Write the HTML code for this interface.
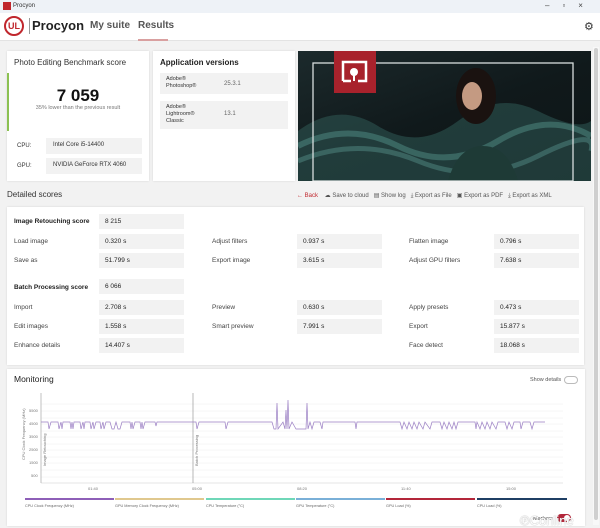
<!DOCTYPE html>
<html><head><meta charset="utf-8"><style>
*{box-sizing:border-box;margin:0;padding:0}
body{width:600px;height:528px;overflow:hidden;background:#f2f2f2;font-family:"Liberation Sans",sans-serif;color:#333;position:relative}
.abs{position:absolute}
.card{position:absolute;background:#fff;box-shadow:0 0 2px rgba(0,0,0,.12)}
.box{position:absolute;background:#f2f2f2}
.t7{font-size:7px}
.lbl{position:absolute;font-size:6.5px;color:#444}
.val{position:absolute;font-size:6.5px;color:#222;background:#f2f2f2;padding-left:6px;line-height:15px;height:15px}
</style></head><body>
<div class="abs" style="left:0;top:0;width:600px;height:13px;background:#eef2f7"></div>
<div class="abs" style="left:3px;top:2px;width:8px;height:8px;background:#c0272d"></div>
<div class="abs t7" style="left:13px;top:3px;font-size:6px;color:#333">Procyon</div>
<div class="abs" style="left:545px;top:1px;font-size:8px;color:#444;letter-spacing:13px">–▫×</div>
<div class="abs" style="left:0;top:13px;width:600px;height:28px;background:#fff;border-bottom:1px solid #e3e3e3"></div>
<div class="abs" style="left:4px;top:16px;width:20px;height:20px;border:2px solid #c0272d;border-radius:50%;color:#c0272d;font-size:9px;font-weight:bold;text-align:center;line-height:16px">UL</div>
<div class="abs" style="left:29px;top:18px;width:1px;height:16px;background:#999"></div>
<div class="abs" style="left:32px;top:18px;font-size:13px;font-weight:bold;color:#222">Procyon</div>
<div class="abs" style="left:90px;top:20px;font-size:10px;font-weight:bold;color:#555">My suite</div>
<div class="abs" style="left:138px;top:20px;font-size:10px;font-weight:bold;color:#555">Results</div>
<div class="abs" style="left:138px;top:39px;width:30px;height:2px;background:#d9a0a0"></div>
<div class="abs" style="left:584px;top:20px;font-size:11px;color:#333">⚙</div>
<div class="abs" style="left:593px;top:47px;width:6px;height:478px;background:#f8f8f8"></div>
<div class="abs" style="left:594px;top:48px;width:4px;height:472px;background:#cfcfcf;border-radius:2px"></div>
<div class="card" style="left:7px;top:51px;width:142px;height:130px"></div>
<div class="abs" style="left:14px;top:58px;font-size:8px;color:#333">Photo Editing Benchmark score</div>
<div class="abs" style="left:7px;top:73px;width:2px;height:58px;background:#8cc152"></div>
<div class="abs" style="left:7px;top:86px;width:142px;text-align:center;font-size:17px;font-weight:bold;color:#111">7 059</div>
<div class="abs" style="left:7px;top:105px;width:142px;text-align:center;font-size:5.5px;color:#777">35% lower than the previous result</div>
<div class="abs t7" style="left:17px;top:143px;font-size:6px">CPU:</div>
<div class="box" style="left:46px;top:138px;width:96px;height:16px"></div>
<div class="abs" style="left:53px;top:142px;font-size:6px">Intel Core i5-14400</div>
<div class="abs t7" style="left:17px;top:163px;font-size:6px">GPU:</div>
<div class="box" style="left:46px;top:158px;width:96px;height:16px"></div>
<div class="abs" style="left:53px;top:162px;font-size:6px">NVIDIA GeForce RTX 4060</div>
<div class="card" style="left:153px;top:51px;width:142px;height:130px"></div>
<div class="abs" style="left:160px;top:58px;font-size:8px;font-weight:bold;color:#222">Application versions</div>
<div class="box" style="left:160px;top:73px;width:128px;height:21px"></div>
<div class="abs" style="left:166px;top:76px;font-size:5.5px;line-height:7px">Adobe®<br>Photoshop®</div>
<div class="abs" style="left:224px;top:81px;font-size:6px;color:#666">25.3.1</div>
<div class="box" style="left:160px;top:101px;width:128px;height:28px"></div>
<div class="abs" style="left:166px;top:104px;font-size:5.5px;line-height:7px">Adobe®<br>Lightroom®<br>Classic</div>
<div class="abs" style="left:224px;top:111px;font-size:6px;color:#666">13.1</div>
<div class="abs" style="left:298px;top:51px;width:293px;height:130px;background:linear-gradient(160deg,#1c2a2c 0%,#10191b 50%,#0d1516 100%);overflow:hidden">
<svg width="293" height="130" style="position:absolute;left:0;top:0">
<path d="M0 80 Q40 50 80 75 T160 70 T240 60 T293 70 L293 130 L0 130Z" fill="#2f5a55" opacity=".55"/>
<path d="M0 95 Q50 70 100 95 T200 90 T293 85" stroke="#5fa59a" stroke-width="6" fill="none" opacity=".4"/>
<path d="M0 110 Q60 85 120 110 T240 105 T293 100" stroke="#6ab0a5" stroke-width="5" fill="none" opacity=".35"/>
<ellipse cx="178" cy="45" rx="20" ry="28" fill="#1a1210"/>
<ellipse cx="174" cy="45" rx="10" ry="14" fill="#c49a82"/>
<path d="M150 130 Q160 95 185 95 Q210 95 220 130Z" fill="#1e3a36"/>
<rect x="15" y="12" width="260" height="118" fill="none" stroke="#d8dede" stroke-width="1.3"/>
<rect x="36" y="0" width="42" height="42" fill="#a8222c"/>
<path d="M45 30 V11 H68 V30 H60 M53 30 H45" stroke="#fff" stroke-width="2.5" fill="none"/>
<circle cx="56" cy="21" r="4" fill="#fff"/><rect x="55" y="21" width="2" height="9" fill="#fff"/>
</svg></div>
<div class="abs" style="left:7px;top:190px;font-size:8px;color:#333">Detailed scores</div>
<div class="abs" style="left:297px;top:192px;font-size:6px;color:#555;white-space:nowrap"><span style="color:#c0272d">← Back</span>&nbsp;&nbsp;&nbsp;&nbsp;☁ Save to cloud&nbsp;&nbsp;&nbsp;▤ Show log&nbsp;&nbsp;&nbsp;⤓ Export as File&nbsp;&nbsp;&nbsp;▣ Export as PDF&nbsp;&nbsp;&nbsp;⤓ Export as XML</div>
<div class="card" style="left:7px;top:207px;width:577px;height:158px"></div>
<div class="lbl" style="left:14px;top:218px;font-weight:bold;color:#222">Image Retouching score</div><div class="val" style="left:99px;top:214px;width:85px">8 215</div>
<div class="lbl" style="left:14px;top:238px">Load image</div><div class="val" style="left:99px;top:234px;width:85px">0.320 s</div>
<div class="lbl" style="left:212px;top:238px">Adjust filters</div><div class="val" style="left:297px;top:234px;width:85px">0.937 s</div>
<div class="lbl" style="left:409px;top:238px">Flatten image</div><div class="val" style="left:494px;top:234px;width:85px">0.796 s</div>
<div class="lbl" style="left:14px;top:257px">Save as</div><div class="val" style="left:99px;top:253px;width:85px">51.799 s</div>
<div class="lbl" style="left:212px;top:257px">Export image</div><div class="val" style="left:297px;top:253px;width:85px">3.615 s</div>
<div class="lbl" style="left:409px;top:257px">Adjust GPU filters</div><div class="val" style="left:494px;top:253px;width:85px">7.638 s</div>
<div class="lbl" style="left:14px;top:284px;font-weight:bold;color:#222">Batch Processing score</div><div class="val" style="left:99px;top:279px;width:85px">6 066</div>
<div class="lbl" style="left:14px;top:304px">Import</div><div class="val" style="left:99px;top:300px;width:85px">2.708 s</div>
<div class="lbl" style="left:212px;top:304px">Preview</div><div class="val" style="left:297px;top:300px;width:85px">0.630 s</div>
<div class="lbl" style="left:409px;top:304px">Apply presets</div><div class="val" style="left:494px;top:300px;width:85px">0.473 s</div>
<div class="lbl" style="left:14px;top:323px">Edit images</div><div class="val" style="left:99px;top:319px;width:85px">1.558 s</div>
<div class="lbl" style="left:212px;top:323px">Smart preview</div><div class="val" style="left:297px;top:319px;width:85px">7.991 s</div>
<div class="lbl" style="left:409px;top:323px">Export</div><div class="val" style="left:494px;top:319px;width:85px">15.877 s</div>
<div class="lbl" style="left:14px;top:342px">Enhance details</div><div class="val" style="left:99px;top:338px;width:85px">14.407 s</div>
<div class="lbl" style="left:409px;top:342px">Face detect</div><div class="val" style="left:494px;top:338px;width:85px">18.068 s</div>
<div class="card" style="left:7px;top:369px;width:578px;height:157px"></div>
<div class="abs" style="left:14px;top:374px;font-size:8.5px;color:#222">Monitoring</div>
<div class="abs" style="left:530px;top:377px;font-size:5.5px;color:#555">Show details</div>
<div class="abs" style="left:564px;top:376px;width:14px;height:8px;border-radius:4px;border:1px solid #bbb;background:#fff"></div>
<svg class="abs" style="left:0;top:0" width="600" height="528">
<g stroke="#eee" stroke-width=".5">
<line x1="41" y1="404" x2="563" y2="404"/><line x1="41" y1="411" x2="563" y2="411"/><line x1="41" y1="418" x2="563" y2="418"/><line x1="41" y1="424" x2="563" y2="424"/><line x1="41" y1="431" x2="563" y2="431"/><line x1="41" y1="437" x2="563" y2="437"/><line x1="41" y1="444" x2="563" y2="444"/><line x1="41" y1="450" x2="563" y2="450"/><line x1="41" y1="457" x2="563" y2="457"/><line x1="41" y1="463" x2="563" y2="463"/><line x1="41" y1="470" x2="563" y2="470"/><line x1="41" y1="477" x2="563" y2="477"/>
</g>
<line x1="41" y1="483" x2="563" y2="483" stroke="#ccc" stroke-width=".6"/>
<line x1="41" y1="393" x2="41" y2="483" stroke="#999" stroke-width=".6"/>
<line x1="193" y1="393" x2="193" y2="483" stroke="#888" stroke-width=".6"/>
<g font-size="4" fill="#777" font-family="Liberation Sans">
<text x="29" y="412">5500</text><text x="29" y="425">4500</text><text x="29" y="438">3500</text><text x="29" y="451">2500</text><text x="29" y="464">1500</text><text x="31" y="477">500</text>
<text x="88" y="490">01:40</text><text x="192" y="490">05:00</text><text x="297" y="490">08:20</text><text x="401" y="490">11:40</text><text x="506" y="490">15:00</text>
<text transform="translate(25,460) rotate(-90)">CPU Clock Frequency (MHz)</text>
<text transform="translate(46,466) rotate(-90)">Image Retouching</text>
<text transform="translate(198,466) rotate(-90)">Batch Processing</text>
</g>
<polyline fill="none" stroke="#9b7fc4" stroke-width=".7" points="41,422 48,422 49,429 51,422 58,422 59,429 61,422 62,429 63,422 70,422 71,429 72,422 73,429 74,422 80,422 81,429 83,422 84,429 85,422 90,422 91,429 93,422 94,429 96,422 100,422 101,429 103,422 104,429 106,422 110,422 112,429 114,429 116,422 118,429 120,429 122,422 130,422 131,429 132,422 133,429 135,422 140,422 141,429 142,422 143,429 145,422 155,422 156,426 157,422 168,422 170,422 180,422 193,422 196,422 197,429 199,422 225,422 226,429 228,422 272,422 274,429 276,429 277,403 278,429 283,422 285,429 286,410 287,429 288,400 289,429 292,422 296,429 306,429 307,403 308,429 310,422 312,429 314,422 320,422 322,429 323,422 340,422 355,422 356,429 357,422 376,422 400,422 402,429 404,422 407,429 409,422 412,429 414,422 417,429 419,422 423,429 425,422 430,429 432,422 440,422 442,429 444,422 447,429 449,422 452,429 454,422 456,429 458,422 470,422 475,422 476,429 477,422 480,429 482,422 485,429 487,422 490,429 492,422 496,429 498,422 505,422 507,429 509,422 512,429 514,422 520,422 521,429 523,422 530,422 532,429 534,422 545,422"/>
<rect x="25" y="498" width="89" height="2" fill="#8e5fb8"/>
<rect x="115" y="498" width="89" height="2" fill="#e0c88e"/>
<rect x="206" y="498" width="89" height="2" fill="#6fd7b8"/>
<rect x="296" y="498" width="89" height="2" fill="#7ab0d8"/>
<rect x="386" y="498" width="89" height="2" fill="#b3263a"/>
<rect x="477" y="498" width="90" height="2" fill="#1f3f64"/>
<g font-size="3.8" fill="#666" font-family="Liberation Sans">
<text x="25" y="507">CPU Clock Frequency (MHz)</text><text x="115" y="507">GPU Memory Clock Frequency (MHz)</text><text x="206" y="507">CPU Temperature (°C)</text><text x="296" y="507">GPU Temperature (°C)</text><text x="386" y="507">GPU Load (%)</text><text x="477" y="507">CPU Load (%)</text>
</g>
<text x="533" y="520" font-size="5.5" fill="#555" font-family="Liberation Sans">Markers</text>
<rect x="557" y="514" width="14" height="8" rx="4" fill="#b3263a"/><circle cx="567" cy="518" r="3" fill="#fff"/>
</svg>
<div class="abs" style="left:520px;top:513px;font-size:13px;color:#fff;text-shadow:0 0 1px #888">℗Conline</div>
</body></html>
